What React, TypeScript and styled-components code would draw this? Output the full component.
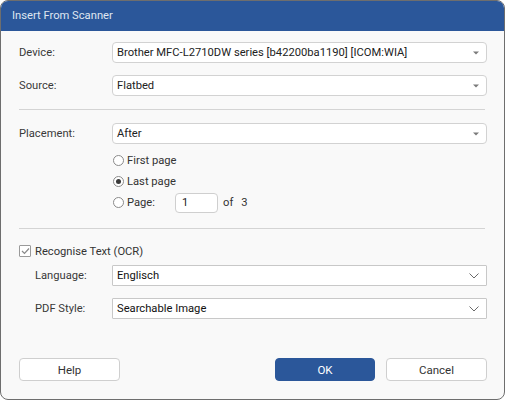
import styled, { createGlobalStyle } from "styled-components";

const GlobalStyle = createGlobalStyle`
  html, body {
    margin: 0;
    padding: 0;
    background: #ffffff;
  }
  * {
    box-sizing: border-box;
  }
`;

const FONT = `Roboto, "Open Sans", Arial, sans-serif`;

const Window = styled.div`
  width: 505px;
  height: 400px;
  border: 1px solid #6e6e6e;
  border-radius: 8px;
  overflow: hidden;
  background: #f9f9f9;
  display: flex;
  flex-direction: column;
  font-family: ${FONT};
  font-size: 11.2px;
  color: #333;
`;

const TitleBar = styled.div`
  height: 30px;
  flex-shrink: 0;
  background: #2b579a;
  color: #dfe6f1;
  display: flex;
  align-items: center;
  padding-left: 11px;
  font-size: 11.2px;
  padding-bottom: 1px;
`;

const Body = styled.div`
  flex: 1;
  display: flex;
  flex-direction: column;
  padding: 11px 17px 0 18px;
`;

const Row = styled.div<{ $mt?: number; $indent?: number }>`
  display: grid;
  grid-template-columns: ${({ $indent = 0 }) => 93 - $indent}px 1fr;
  align-items: center;
  margin-top: ${({ $mt = 0 }) => $mt}px;
  padding-left: ${({ $indent = 0 }) => $indent}px;
`;

const Label = styled.span`
  color: #3a3a3a;
`;

const Select = styled.div<{ $square?: boolean; $strong?: boolean }>`
  height: 21px;
  background: #ffffff;
  border: 1px solid ${({ $square }) => ($square ? "#c8c8c8" : "#d2d2d2")};
  border-radius: ${({ $square }) => ($square ? "1px" : "4px")};
  display: flex;
  align-items: center;
  justify-content: space-between;
  padding: 0 7px 0 4px;
  color: ${({ $strong }) => ($strong ? "#111" : "#222")};
`;

const Separator = styled.div<{ $mt: number }>`
  height: 1px;
  background: #d4d4d4;
  margin-top: ${({ $mt }) => $mt}px;
  margin-right: 2px;
`;

const RadioGroup = styled.div`
  display: flex;
  flex-direction: column;
  margin-top: 6px;
  margin-left: 94px;
`;

const RadioRow = styled.label`
  display: flex;
  align-items: center;
  height: 21px;
  gap: 3px;
  color: #333;
`;

const RadioCircle = styled.span<{ $checked?: boolean }>`
  width: 11px;
  height: 11px;
  border-radius: 50%;
  border: 1px solid #8a8a8a;
  background: #fff;
  display: inline-flex;
  align-items: center;
  justify-content: center;
  &::after {
    content: "";
    width: 5px;
    height: 5px;
    border-radius: 50%;
    background: ${({ $checked }) => ($checked ? "#3a3a3a" : "transparent")};
  }
`;

const PageLabel = styled.span`
  width: 45px;
`;

const PageInput = styled.div`
  width: 43px;
  height: 20px;
  border: 1px solid #cfcfcf;
  border-radius: 4px;
  background: #fff;
  display: flex;
  align-items: center;
  padding-left: 6px;
  color: #222;
`;

const OfText = styled.span`
  margin-left: 2px;
  display: flex;
  gap: 8px;
`;

const CheckRow = styled.label`
  display: flex;
  align-items: center;
  gap: 4px;
  margin-top: 15px;
  height: 14px;
`;

const CheckBox = styled.span`
  width: 12px;
  height: 12px;
  border: 1px solid #9a9a9a;
  border-radius: 1px;
  background: #fff;
  display: inline-flex;
  align-items: center;
  justify-content: center;
`;

const Footer = styled.div`
  display: flex;
  align-items: center;
  margin-top: auto;
  margin-bottom: 18px;
`;

const Button = styled.button<{ $primary?: boolean }>`
  height: 23px;
  width: ${({ $primary }) => ($primary ? "100px" : "101px")};
  border-radius: 4px;
  border: 1px solid ${({ $primary }) => ($primary ? "#2b579a" : "#cfcfcf")};
  background: ${({ $primary }) => ($primary ? "#2b579a" : "#ffffff")};
  color: ${({ $primary }) => ($primary ? "#ffffff" : "#333")};
  font-family: ${FONT};
  font-size: 11.5px;
  padding: 0;
`;

const Spacer = styled.div`
  flex: 1;
`;

const Triangle = () => (
  <svg width="6" height="4" viewBox="0 0 6 4">
    <path d="M0 0.5 L6 0.5 L3 3.5 Z" fill="#7a7a7a" />
  </svg>
);

const Chevron = () => (
  <svg width="10" height="6" viewBox="0 0 10 6">
    <path d="M0.5 0.5 L5 5 L9.5 0.5" fill="none" stroke="#6a6a6a" strokeWidth="1" />
  </svg>
);

export default function App() {
  return (
    <>
      <GlobalStyle />
      <Window>
        <TitleBar>Insert From Scanner</TitleBar>
        <Body>
          <Row>
            <Label>Device:</Label>
            <Select>
              <span>Brother MFC-L2710DW series [b42200ba1190] [ICOM:WIA]</span>
              <Triangle />
            </Select>
          </Row>
          <Row $mt={12}>
            <Label>Source:</Label>
            <Select>
              <span>Flatbed</span>
              <Triangle />
            </Select>
          </Row>
          <Separator $mt={13} />
          <Row $mt={13}>
            <Label>Placement:</Label>
            <Select>
              <span>After</span>
              <Triangle />
            </Select>
          </Row>
          <RadioGroup>
            <RadioRow>
              <RadioCircle />
              First page
            </RadioRow>
            <RadioRow>
              <RadioCircle $checked />
              Last page
            </RadioRow>
            <RadioRow>
              <RadioCircle />
              <PageLabel>Page:</PageLabel>
              <PageInput>1</PageInput>
              <OfText>
                <span>of</span>
                <span>3</span>
              </OfText>
            </RadioRow>
          </RadioGroup>
          <Separator $mt={15} />
          <CheckRow>
            <CheckBox>
              <svg width="9" height="8" viewBox="0 0 9 8">
                <path d="M1 4 L3.5 6.5 L8 1.5" fill="none" stroke="#8a8a8a" strokeWidth="1.2" />
              </svg>
            </CheckBox>
            Recognise Text (OCR)
          </CheckRow>
          <Row $mt={7} $indent={16}>
            <Label>Language:</Label>
            <Select $square $strong>
              <span>Englisch</span>
              <Chevron />
            </Select>
          </Row>
          <Row $mt={12} $indent={16}>
            <Label>PDF Style:</Label>
            <Select $square $strong>
              <span>Searchable Image</span>
              <Chevron />
            </Select>
          </Row>
          <Footer>
            <Button>Help</Button>
            <Spacer />
            <Button $primary>OK</Button>
            <Button style={{ marginLeft: 11 }}>Cancel</Button>
          </Footer>
        </Body>
      </Window>
    </>
  );
}
